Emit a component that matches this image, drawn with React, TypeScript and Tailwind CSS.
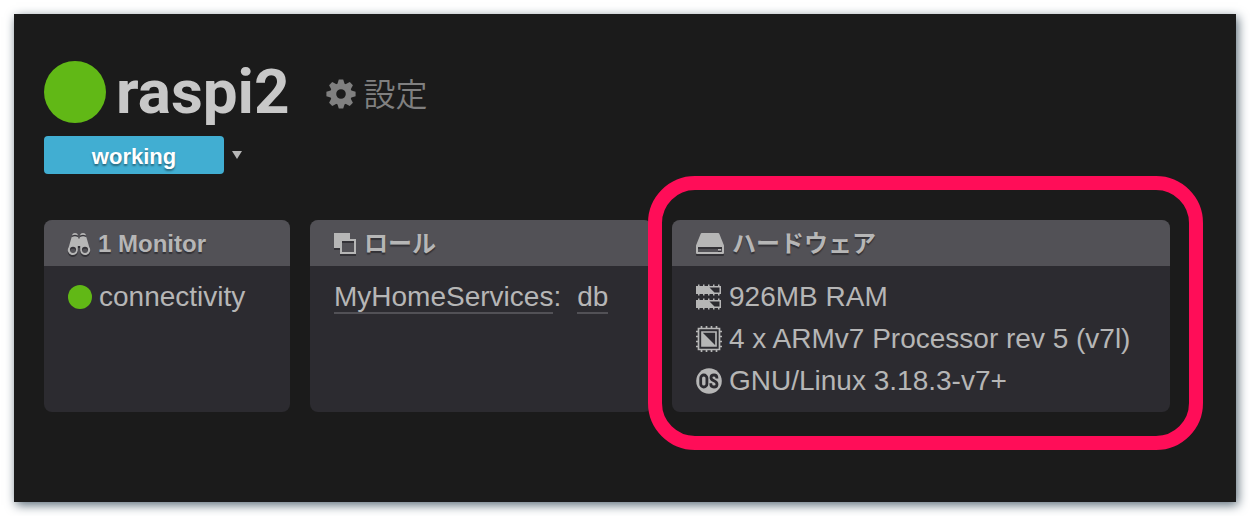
import type { ReactNode } from "react";

const TEETH = [0, 45, 90, 135, 180, 225, 270, 315];

function GearIcon() {
  return (
    <svg viewBox="0 0 30 30" className="size-[30px] shrink-0" fill="currentColor" aria-hidden="true">
      <circle cx="15" cy="15" r="7.8" fill="none" stroke="currentColor" strokeWidth="6" />
      {TEETH.map((angle) => (
        <path key={angle} d="M11.200 5.500L12.800 .4H17.200L18.800 5.500Z" transform={`rotate(${angle} 15 15)`} />
      ))}
    </svg>
  );
}

function BinocularsIcon() {
  return (
    <svg viewBox="0 0 22 22" className="size-[22px] shrink-0 overflow-visible" fill="currentColor" aria-hidden="true">
      <path d="M4 2.300C4.500 .7 5.500 0 7 0S9.600 .9 10 2.300Q7 1.100 4 2.300Z" />
      <path d="M12 2.300C12.400 .9 13.500 0 15 0S17.500 .7 18 2.300Q15 1.100 12 2.300Z" />
      <path
        fillRule="evenodd"
        d="M3.600 4.300Q7 2 10.200 4.300V5.500H11.800V4.300Q15 2 18.400 4.300L21.300 14.200A5 5 0 1 1 12.200 17.500V13H9.800V17.500A5 5 0 1 1 .7 14.200ZM5 13.700A3.100 3.100 0 1 0 5 19.900A3.100 3.100 0 1 0 5 13.700ZM17 13.700A3.100 3.100 0 1 0 17 19.900A3.100 3.100 0 1 0 17 13.700Z"
      />
    </svg>
  );
}

function RolesIcon() {
  return (
    <svg viewBox="0 0 22 22" className="size-[22px] shrink-0 overflow-visible" fill="currentColor" aria-hidden="true">
      <path d="M0 0H16V6H6V15H0Z" />
      <path fillRule="evenodd" d="M6 6H22V21H6ZM8 8V19H20V8Z" />
    </svg>
  );
}

function DriveIcon() {
  return (
    <svg viewBox="0 0 28 22" className="h-[22px] w-7 shrink-0 overflow-visible" fill="currentColor" aria-hidden="true">
      <path
        fillRule="evenodd"
        d="M5.800 0H22.200Q23 0 23.300 .8L28 12.500V20Q28 21 27 21H1Q0 21 0 20V12.500L4.700 .8Q5 0 5.800 0ZM2 14V19H26V14ZM22 16H25V17.500H22Z"
      />
    </svg>
  );
}

function MemoryIcon() {
  return (
    <svg viewBox="0 0 26 26" className="size-[26px] shrink-0" fill="currentColor" aria-hidden="true">
      {[0, 14].map((y) => (
        <g key={y} transform={`translate(0 ${y})`}>
          <path fillRule="evenodd" d="M0 2H25V10H0ZM13.500 3.500L18.500 8.500H23.500V3.500Z" />
          <path d="M2 .5H3.500V2H2ZM7 .5H8.500V2H7ZM12 .5H13.500V2H12ZM17 .5H18.500V2H17ZM22 .5H23.500V2H22ZM2 10H3.500V11.500H2ZM7 10H8.500V11.500H7ZM12 10H13.500V11.500H12ZM17 10H18.500V11.500H17ZM22 10H23.500V11.500H22Z" />
        </g>
      ))}
    </svg>
  );
}

function ChipIcon() {
  return (
    <svg viewBox="0 0 26 26" className="size-[26px] shrink-0" fill="none" stroke="currentColor" strokeWidth="1.700" aria-hidden="true">
      <path d="M2.500 2.500H23.500V23.500H2.500Z" />
      <path d="M6 6H20V20H6Z" />
      <path d="M6 6L20 20H6Z" fill="currentColor" stroke="none" />
      <path d="M5.500 0V2M10.500 0V2M15.500 0V2M20.500 0V2M5.500 24V26M10.500 24V26M15.500 24V26M20.500 24V26M0 5.500H2M0 10.500H2M0 15.500H2M0 20.500H2M24 5.500H26M24 10.500H26M24 15.500H26M24 20.500H26" />
    </svg>
  );
}

function OsIcon() {
  return (
    <svg viewBox="0 0 26 26" className="size-[26px] shrink-0" fill="currentColor" aria-hidden="true">
      <circle cx="13" cy="13" r="12.800" />
      <g fill="none" stroke="#2c2b30" strokeWidth="2.800">
        <rect x="4.700" y="7" width="6.200" height="12" rx="3.100" />
        <path d="M20.900 10.500V10C20.900 8 19.900 7 18 7S15 8 15 9.700C15 13.200 21 12.400 21 16.200C21 18 20 19 18 19S14.800 18 14.800 16V15.300" />
      </g>
    </svg>
  );
}

function Card({ icon, title, children }: { icon: ReactNode; title: string; children: ReactNode }) {
  return (
    <section className="overflow-hidden rounded-lg bg-[#2c2b30]">
      <header className="flex h-[46px] items-center gap-2 bg-[#525156] px-6 pt-0.5">
        <span className="drop-shadow-[0_2px_0_#333237]">{icon}</span>
        <h2 className="text-2xl font-bold text-shadow-[0_2px_1px_#333237]">{title}</h2>
      </header>
      <div className="px-6 py-2.5 text-[28px] leading-[42px] whitespace-nowrap">{children}</div>
    </section>
  );
}

function Row({ icon, children }: { icon: ReactNode; children: ReactNode }) {
  return (
    <li className="flex items-center gap-[7px]">
      {icon}
      <span>{children}</span>
    </li>
  );
}

export default function App() {
  return (
    <div className="bg-white p-3.5 font-['Liberation_Sans','Noto_Sans_CJK_JP',sans-serif] text-[#b6b6b6]">
      <main className="bg-[#1b1b1b] px-[30px] pt-[47px] pb-[90px] shadow-[2px_3px_10px_#5b6c78]">
        <div className="flex h-[62px] items-center">
          <span className="size-[62px] shrink-0 rounded-full bg-[#61b816]" />
          <h1 className="ml-2.5 font-['Roboto',sans-serif] text-[62px] leading-[62px] font-bold text-[#c8c8c8]">raspi2</h1>
          <a href="#settings" className="ml-9 flex items-center gap-2 text-[32px] leading-10 font-[350] text-[#808080]">
            <span className="pt-1">
              <GearIcon />
            </span>
            <span className="font-['Noto_Sans_CJK_JP',sans-serif]">設定</span>
          </a>
        </div>
        <div className="mt-[13px] flex items-center gap-2">
          <button type="button" className="h-[38px] w-[180px] rounded bg-[#41aed2] pt-1 text-[22px] leading-8 font-bold text-white text-shadow-[0_2px_2px_#00000066]">
            working
          </button>
          <button type="button" aria-label="Change status" className="text-[#b6b6b6]">
            <svg viewBox="0 0 10 8" className="h-2 w-2.5" fill="currentColor" aria-hidden="true">
              <path d="M0 0H10L5 8Z" />
            </svg>
          </button>
        </div>
        <div className="mt-[46px] mr-9 grid grid-cols-[246fr_342fr_498fr] gap-5">
          <Card icon={<BinocularsIcon />} title="1 Monitor">
            <ul>
              <Row icon={<span className="size-6 shrink-0 rounded-full bg-[#61b816]" />}>connectivity</Row>
            </ul>
          </Card>
          <Card icon={<RolesIcon />} title="ロール">
            <div className="flex items-start pt-1.5 leading-[30px]">
              <a href="#service" className="border-b-2 border-[#525156]">MyHomeServices</a>
              <span className="mr-4">:</span>
              <a href="#role" className="border-b-2 border-[#525156]">db</a>
            </div>
          </Card>
          <div className="relative">
            <Card icon={<DriveIcon />} title="ハードウェア">
              <ul>
                <Row icon={<MemoryIcon />}>926MB RAM</Row>
                <Row icon={<ChipIcon />}>4 x ARMv7 Processor rev 5 (v7l)</Row>
                <Row icon={<OsIcon />}>GNU/Linux 3.18.3-v7+</Row>
              </ul>
            </Card>
            <div className="pointer-events-none absolute -top-11 -right-[33px] -bottom-[38px] -left-6 rounded-[47px] border-[14px] border-[#ff0d58]" />
          </div>
        </div>
      </main>
    </div>
  );
}
